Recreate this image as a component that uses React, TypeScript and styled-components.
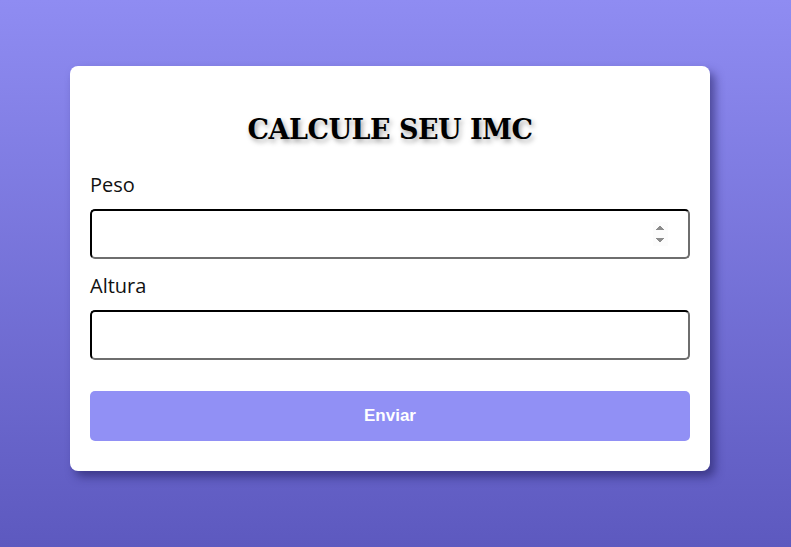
import React from "react";
import styled, { createGlobalStyle } from "styled-components";

const Global = createGlobalStyle`
  html, body { margin: 0; padding: 0; }
  body {
    min-height: 547px;
    background: linear-gradient(180deg, #8f8cf2 0%, #5d59bf 100%);
    font-family: "Open Sans", sans-serif;
  }
  input[type="number"]::-webkit-inner-spin-button { opacity: 1; }
`;

const Page = styled.main`
  box-sizing: border-box;
  min-height: 547px;
  padding: 66px 0 0 70px;
`;

const Card = styled.form`
  box-sizing: border-box;
  width: 640px;
  background: #ffffff;
  border-radius: 8px;
  padding: 30px 20px 30px;
  box-shadow: 5px 6px 10px rgba(30, 25, 90, 0.55);
`;

const Title = styled.h1`
  margin: 16px 0 23px;
  text-align: center;
  font-family: "DejaVu Serif", serif;
  font-weight: 700;
  font-size: 27px;
  line-height: 36px;
  letter-spacing: -0.5px;
  color: #000;
  text-shadow: 2px 3px 5px rgba(0, 0, 0, 0.35);
`;

const Label = styled.label`
  display: block;
  font-family: "Open Sans", sans-serif;
  font-size: 20px;
  line-height: 27px;
  color: #111;
  margin-bottom: 11px;
`;

const Input = styled.input<{ $last?: boolean }>`
  display: block;
  box-sizing: border-box;
  width: 100%;
  height: 50px;
  margin: 0 0 ${(p) => (p.$last ? "0" : "13px")};
  padding: 0 20px;
  border: 2px inset #767676;
  border-top-color: #1f1f1f;
  border-left-color: #1f1f1f;
  border-right-color: #6e6e6e;
  border-bottom-color: #6e6e6e;
  border-radius: 5px;
  font-size: 18px;
  font-family: "Open Sans", sans-serif;
  background: #fff;
  outline: none;
`;

const Button = styled.button`
  display: block;
  width: 100%;
  height: 50px;
  margin-top: 31px;
  border: none;
  border-radius: 5px;
  background: #9190f5;
  color: #fff;
  font-family: "Liberation Sans", Arial, sans-serif;
  font-weight: 700;
  font-size: 17px;
  cursor: pointer;
`;

export default function App() {
  return (
    <>
      <Global />
      <Page>
        <Card onSubmit={(e) => e.preventDefault()}>
          <Title>CALCULE SEU IMC</Title>
          <Label htmlFor="peso">Peso</Label>
          <Input id="peso" type="number" />
          <Label htmlFor="altura">Altura</Label>
          <Input id="altura" type="text" $last />
          <Button type="submit">Enviar</Button>
        </Card>
      </Page>
    </>
  );
}
